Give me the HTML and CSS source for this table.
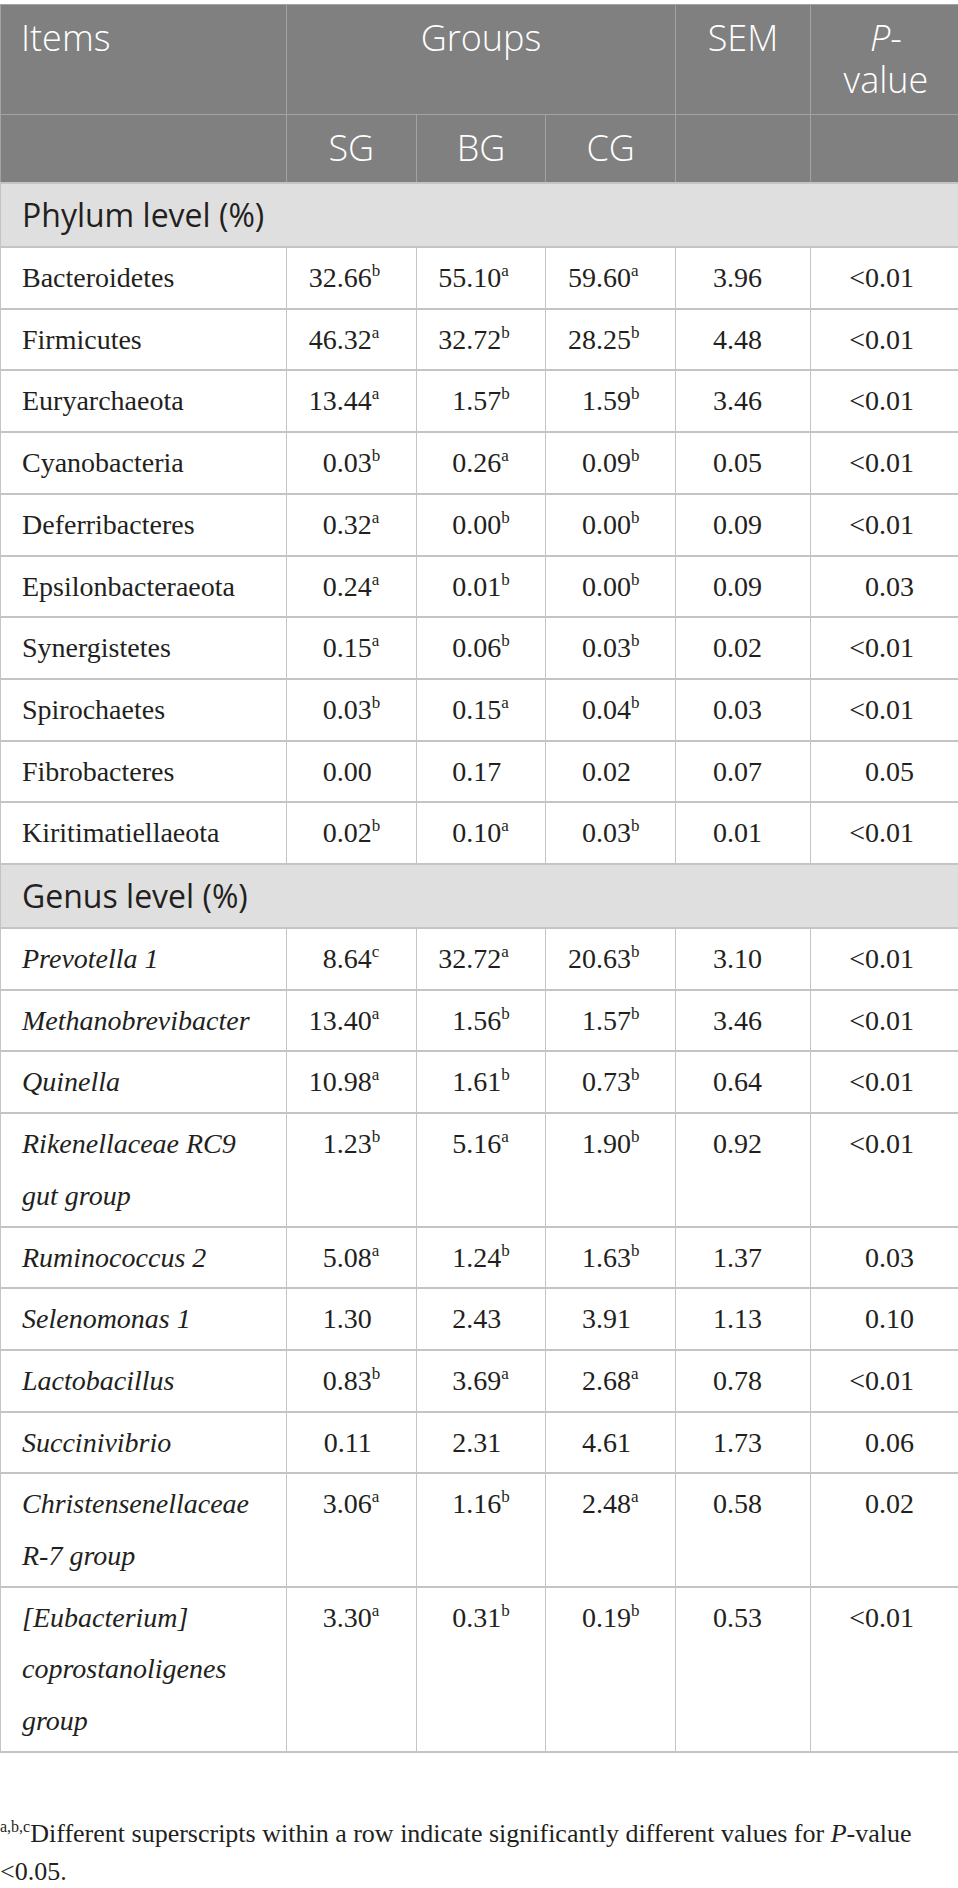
FILE: index.html
```html
<!DOCTYPE html>
<html>
<head>
<meta charset="utf-8">
<link rel="stylesheet" href="styles.css">
</head>
<body>
<table class="tbl">
  <thead>
    <tr class="h1">
      <th class="left">Items</th>
      <th colspan="3">Groups</th>
      <th>SEM</th>
      <th><i>P</i>-<br>value</th>
    </tr>
    <tr class="h2">
      <th></th>
      <th>SG</th>
      <th>BG</th>
      <th>CG</th>
      <th></th>
      <th></th>
    </tr>
  </thead>
  <tbody>
    <tr class="sec"><td colspan="6">Phylum level (%)</td></tr>
    <tr><td class="name">Bacteroidetes</td><td class="c2">32.66<span class="s">b</span></td><td class="c3">55.10<span class="s">a</span></td><td class="c4">59.60<span class="s">a</span></td><td class="c5">3.96</td><td class="c6">&lt;0.01</td></tr>
    <tr><td class="name">Firmicutes</td><td class="c2">46.32<span class="s">a</span></td><td class="c3">32.72<span class="s">b</span></td><td class="c4">28.25<span class="s">b</span></td><td class="c5">4.48</td><td class="c6">&lt;0.01</td></tr>
    <tr><td class="name">Euryarchaeota</td><td class="c2">13.44<span class="s">a</span></td><td class="c3">1.57<span class="s">b</span></td><td class="c4">1.59<span class="s">b</span></td><td class="c5">3.46</td><td class="c6">&lt;0.01</td></tr>
    <tr><td class="name">Cyanobacteria</td><td class="c2">0.03<span class="s">b</span></td><td class="c3">0.26<span class="s">a</span></td><td class="c4">0.09<span class="s">b</span></td><td class="c5">0.05</td><td class="c6">&lt;0.01</td></tr>
    <tr><td class="name">Deferribacteres</td><td class="c2">0.32<span class="s">a</span></td><td class="c3">0.00<span class="s">b</span></td><td class="c4">0.00<span class="s">b</span></td><td class="c5">0.09</td><td class="c6">&lt;0.01</td></tr>
    <tr><td class="name">Epsilonbacteraeota</td><td class="c2">0.24<span class="s">a</span></td><td class="c3">0.01<span class="s">b</span></td><td class="c4">0.00<span class="s">b</span></td><td class="c5">0.09</td><td class="c6">0.03</td></tr>
    <tr><td class="name">Synergistetes</td><td class="c2">0.15<span class="s">a</span></td><td class="c3">0.06<span class="s">b</span></td><td class="c4">0.03<span class="s">b</span></td><td class="c5">0.02</td><td class="c6">&lt;0.01</td></tr>
    <tr><td class="name">Spirochaetes</td><td class="c2">0.03<span class="s">b</span></td><td class="c3">0.15<span class="s">a</span></td><td class="c4">0.04<span class="s">b</span></td><td class="c5">0.03</td><td class="c6">&lt;0.01</td></tr>
    <tr><td class="name">Fibrobacteres</td><td class="c2">0.00<span class="s"></span></td><td class="c3">0.17<span class="s"></span></td><td class="c4">0.02<span class="s"></span></td><td class="c5">0.07</td><td class="c6">0.05</td></tr>
    <tr><td class="name">Kiritimatiellaeota</td><td class="c2">0.02<span class="s">b</span></td><td class="c3">0.10<span class="s">a</span></td><td class="c4">0.03<span class="s">b</span></td><td class="c5">0.01</td><td class="c6">&lt;0.01</td></tr>
    <tr class="sec"><td colspan="6">Genus level (%)</td></tr>
    <tr><td class="name"><i>Prevotella 1</i></td><td class="c2">8.64<span class="s">c</span></td><td class="c3">32.72<span class="s">a</span></td><td class="c4">20.63<span class="s">b</span></td><td class="c5">3.10</td><td class="c6">&lt;0.01</td></tr>
    <tr><td class="name"><i>Methanobrevibacter</i></td><td class="c2">13.40<span class="s">a</span></td><td class="c3">1.56<span class="s">b</span></td><td class="c4">1.57<span class="s">b</span></td><td class="c5">3.46</td><td class="c6">&lt;0.01</td></tr>
    <tr><td class="name"><i>Quinella</i></td><td class="c2">10.98<span class="s">a</span></td><td class="c3">1.61<span class="s">b</span></td><td class="c4">0.73<span class="s">b</span></td><td class="c5">0.64</td><td class="c6">&lt;0.01</td></tr>
    <tr><td class="name"><i>Rikenellaceae RC9 gut group</i></td><td class="c2">1.23<span class="s">b</span></td><td class="c3">5.16<span class="s">a</span></td><td class="c4">1.90<span class="s">b</span></td><td class="c5">0.92</td><td class="c6">&lt;0.01</td></tr>
    <tr><td class="name"><i>Ruminococcus 2</i></td><td class="c2">5.08<span class="s">a</span></td><td class="c3">1.24<span class="s">b</span></td><td class="c4">1.63<span class="s">b</span></td><td class="c5">1.37</td><td class="c6">0.03</td></tr>
    <tr><td class="name"><i>Selenomonas 1</i></td><td class="c2">1.30<span class="s"></span></td><td class="c3">2.43<span class="s"></span></td><td class="c4">3.91<span class="s"></span></td><td class="c5">1.13</td><td class="c6">0.10</td></tr>
    <tr><td class="name"><i>Lactobacillus</i></td><td class="c2">0.83<span class="s">b</span></td><td class="c3">3.69<span class="s">a</span></td><td class="c4">2.68<span class="s">a</span></td><td class="c5">0.78</td><td class="c6">&lt;0.01</td></tr>
    <tr><td class="name"><i>Succinivibrio</i></td><td class="c2">0.11<span class="s"></span></td><td class="c3">2.31<span class="s"></span></td><td class="c4">4.61<span class="s"></span></td><td class="c5">1.73</td><td class="c6">0.06</td></tr>
    <tr><td class="name"><i>Christensenellaceae R-7 group</i></td><td class="c2">3.06<span class="s">a</span></td><td class="c3">1.16<span class="s">b</span></td><td class="c4">2.48<span class="s">a</span></td><td class="c5">0.58</td><td class="c6">0.02</td></tr>
    <tr><td class="name"><i>[Eubacterium] coprostanoligenes group</i></td><td class="c2">3.30<span class="s">a</span></td><td class="c3">0.31<span class="s">b</span></td><td class="c4">0.19<span class="s">b</span></td><td class="c5">0.53</td><td class="c6">&lt;0.01</td></tr>
  </tbody>
</table>
<p class="note"><sup class="fs">a,b,c</sup>Different superscripts within a row indicate significantly different values for <i>P</i>-value &lt;0.05.</p>
</body>
</html>
```
FILE: styles.css
```css
html, body {
  margin: 0;
  padding: 0;
  background: #ffffff;
}
body {
  padding-top: 4px;
  color: #231f20;
  font-family: "Liberation Serif", "Times New Roman", serif;
}
.tbl {
  width: 958px;
  border-collapse: collapse;
  table-layout: fixed;
}
.tbl th {
  background: #7f807f;
  color: #ffffff;
  font-family: "Open Sans", Lato, sans-serif;
  font-weight: 300;
  font-size: 36px;
  line-height: 42px;
  padding: 12px 20px 13px;
  text-align: center;
  vertical-align: top;
  border: 1px solid #a3a3a3;
}
.tbl th.left { text-align: left; }
.tbl tr.h1 th:nth-child(1) { width: 245px; }
.tbl tr.h1 th:nth-child(2) { width: 348px; }
.tbl tr.h1 th:nth-child(3) { width: 94px; }
.tbl tr.h1 th:nth-child(4) { width: 110px; }
.tbl td {
  border: 1px solid #c4c4c4;
  border-top-width: 2px;
  border-bottom-width: 2px;
  font-size: 28px;
  line-height: 51.7px;
  padding: 4px 20px 4px 21px;
  vertical-align: top;
}
.tbl tr.sec td {
  background: #e0dfe0;
  font-family: "Open Sans", Lato, sans-serif;
  font-weight: 400;
  font-size: 32px;
  line-height: 42px;
  padding: 10px 21px 10px;
  color: #231f20;
}
.tbl td.name { text-align: left; }
.tbl td.c2, .tbl td.c3, .tbl td.c4 {
  text-align: right;
  padding-right: 33px;
  padding-left: 0;
}
.tbl td.c5 {
  text-align: right;
  padding-right: 48px;
  padding-left: 0;
}
.tbl td.c6 {
  text-align: right;
  padding-right: 47px;
  padding-left: 0;
}
.s {
  display: inline-block;
  width: 11px;
  text-align: left;
  font-size: 17px;
  line-height: 1;
  vertical-align: 11px;
}
.note {
  margin: 62px 0 0;
  font-size: 26px;
  line-height: 38px;
  padding: 0;
}
.fs {
  font-size: 16px;
  vertical-align: 10px;
  line-height: 1;
}
```
